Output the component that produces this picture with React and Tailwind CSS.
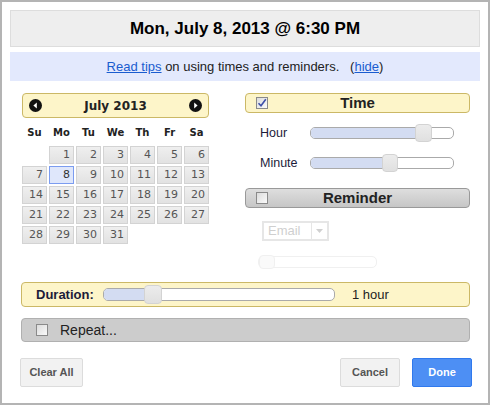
import React from 'react';

const arial = { fontFamily: '"Liberation Sans", Arial, sans-serif' };
const verdana = { fontFamily: '"DejaVu Sans", Verdana, sans-serif' };

// slider: track with blue fill up to the handle
const Slider = ({ width, height = 12, handleLeft, handleW = 17, handleH = 18, disabled }) => {
    return (
        <div
            className={`relative rounded-[5px] border bg-white ${disabled ? 'border-[#f0f0f0]' : 'border-[#aaaaaa]'}`}
            style={{ width, height }}
        >
            {!disabled && (
                <div
                    className="absolute left-0 top-0 bottom-0 rounded-l-[4px] bg-[#d3dcf2]"
                    style={{ width: handleLeft + 6 }}
                />
            )}
            <div
                className={`absolute rounded-[4px] border ${disabled ? 'border-[#f0f0f0] bg-[#fafafa]' : 'border-[#d3d3d3] bg-gradient-to-b from-[#ececec] to-[#e0e0e0]'}`}
                style={{ left: handleLeft - 1, top: -(handleH - height) / 2 - 1, width: handleW, height: handleH }}
            />
        </div>
    );
};

const Checkbox = ({ checked }) => (
    <div className="w-[12px] h-[12px] border border-[#8a8a8a] bg-gradient-to-br from-[#dcdcdc] to-[#fafafa] flex items-center justify-center">
        {checked && (
            <svg width="10" height="10" viewBox="0 0 10 10">
                <path d="M1.5 5.2 L4 7.8 L8.8 1.2" stroke="#3d4fa8" strokeWidth="1.6" fill="none" />
            </svg>
        )}
    </div>
);

const NavIcon = ({ dir }) => (
    <svg width="13" height="13" viewBox="0 0 13 13">
        <circle cx="6.5" cy="6.5" r="6.5" fill="#111" />
        {dir === 'prev'
            ? <path d="M7.8 3.5 L4.4 6.5 L7.8 9.5 Z" fill="#fff" />
            : <path d="M5.2 3.5 L8.6 6.5 L5.2 9.5 Z" fill="#fff" />}
    </svg>
);

const days = [null, 1, 2, 3, 4, 5, 6, 7, 8, 9, 10, 11, 12, 13, 14, 15, 16, 17, 18, 19, 20, 21, 22, 23, 24, 25, 26, 27, 28, 29, 30, 31];

const App = () => {
    return (
        <div className="w-[490px] h-[405px] border-2 border-[#b4b4b4] bg-white px-[8px] pt-[8px]" style={arial}>
            {/* Title */}
            <div className="h-[37px] bg-[#eeeeee] border border-[#dddddd] flex items-center justify-center text-[17px] font-bold text-black">
                Mon, July 8, 2013 @ 6:30 PM
            </div>

            {/* Tips */}
            <div className="mt-[5px] h-[29px] bg-[#e3e9fd] flex items-center justify-center text-[13px] text-[#222]">
                <span className="text-[#1a5ccf] underline">Read tips</span>
                <span>&nbsp;on using times and reminders.&nbsp;&nbsp;&nbsp;(</span>
                <span className="text-[#1a5ccf] underline">hide</span>
                <span>)</span>
            </div>

            <div className="flex mt-[12px]">
                {/* Calendar */}
                <div className="ml-[12px] w-[187px]" style={verdana}>
                    <div className="h-[25px] rounded-[4px] border border-[#cbb866] bg-[#fdf5c9] flex items-center justify-between px-[6px]">
                        <NavIcon dir="prev" />
                        <span className="text-[12px] font-bold text-[#222]">July 2013</span>
                        <NavIcon dir="next" />
                    </div>
                    <div className="grid grid-cols-7 gap-x-[2px] h-[28px] items-center text-[10px] font-bold text-[#222] text-center pt-[1px]">
                        {['Su', 'Mo', 'Tu', 'We', 'Th', 'Fr', 'Sa'].map(d => <span key={d}>{d}</span>)}
                    </div>
                    <div className="grid grid-cols-7 gap-[2px]">
                        {days.map((d, i) => d === null ? <div key={i} /> : (
                            <div
                                key={i}
                                className={`h-[18px] border text-[11px] text-right pr-[3px] leading-[16px] ${d === 8 ? 'border-[#7b9cf0] bg-[#dfe7fb] text-[#333]' : 'border-[#d3d3d3] bg-gradient-to-b from-[#efefef] to-[#e2e2e2] text-[#555]'}`}
                            >
                                {d}
                            </div>
                        ))}
                    </div>
                </div>

                {/* Time + reminder */}
                <div className="ml-[36px] w-[225px]">
                    <div className="h-[20px] rounded-[4px] border border-[#cbb866] bg-[#fdf5c9] flex items-center px-[10px]">
                        <Checkbox checked />
                        <span className="flex-1 text-center text-[15px] font-bold text-[#222] pr-[12px]">Time</span>
                    </div>
                    <div className="mt-[11px] h-[18px] flex items-center">
                        <span className="ml-[15px] w-[50px] text-[12.5px] text-[#1c1c3a]">Hour</span>
                        <Slider width={144} handleLeft={105} />
                    </div>
                    <div className="mt-[12px] h-[18px] flex items-center">
                        <span className="ml-[15px] w-[50px] text-[12.5px] text-[#1c1c3a]">Minute</span>
                        <Slider width={144} handleLeft={72} handleW={16} />
                    </div>
                    <div className="mt-[16px] h-[20px] rounded-[4px] border border-[#999999] bg-gradient-to-b from-[#dedede] to-[#c6c6c6] flex items-center px-[10px]">
                        <Checkbox />
                        <span className="flex-1 text-center text-[15px] font-bold text-[#222] pr-[12px]">Reminder</span>
                    </div>
                    <div className="mt-[13px] ml-[17px] w-[67px] h-[20px] border-2 border-[#e6e6e6] flex items-center">
                        <span className="flex-1 pl-[4px] text-[13px] text-[#cfcfcf]">Email</span>
                        <div className="w-[16px] h-full border-l border-[#e6e6e6] flex items-center justify-center">
                            <svg width="7" height="4" viewBox="0 0 7 4"><path d="M0 0 L7 0 L3.5 4 Z" fill="#d0d0d0" /></svg>
                        </div>
                    </div>
                    <div className="mt-[15px] ml-[13px]">
                        <Slider width={119} handleLeft={1} handleW={16} handleH={14} disabled />
                    </div>
                </div>
            </div>

            {/* Duration */}
            <div className="mt-[14px] ml-[11px] w-[449px] h-[25px] rounded-[4px] border border-[#cbb866] bg-[#fdf5c9] flex items-center">
                <span className="ml-[14px] w-[67px] text-[13px] font-bold text-[#1c1c3a]">Duration:</span>
                <Slider width={232} height={13} handleLeft={41} handleW={18} handleH={19} />
                <span className="ml-[17px] text-[13px] text-[#222]">1 hour</span>
            </div>

            {/* Repeat */}
            <div className="mt-[11px] ml-[11px] w-[449px] h-[24px] rounded-[4px] border border-[#b0b0b0] bg-[#cccccc] flex items-center">
                <div className="ml-[14px]"><Checkbox /></div>
                <span className="ml-[12px] text-[14px] text-[#222]">Repeat...</span>
            </div>

            {/* Buttons */}
            <div className="mt-[16px] flex items-center">
                <button className="ml-[10px] w-[63px] h-[29px] rounded-[2px] border border-[#dcdcdc] bg-[#f2f2f2] text-[11px] font-bold text-[#555]">
                    Clear All
                </button>
                <div className="flex-1" />
                <button className="w-[60px] h-[29px] rounded-[2px] border border-[#dcdcdc] bg-[#f2f2f2] text-[11px] font-bold text-[#555]">
                    Cancel
                </button>
                <button className="ml-[12px] mr-[8px] w-[60px] h-[29px] rounded-[2px] border border-[#3079ed] bg-[#4d8ff4] text-[11px] font-bold text-white">
                    Done
                </button>
            </div>
        </div>
    );
};

export default App;
